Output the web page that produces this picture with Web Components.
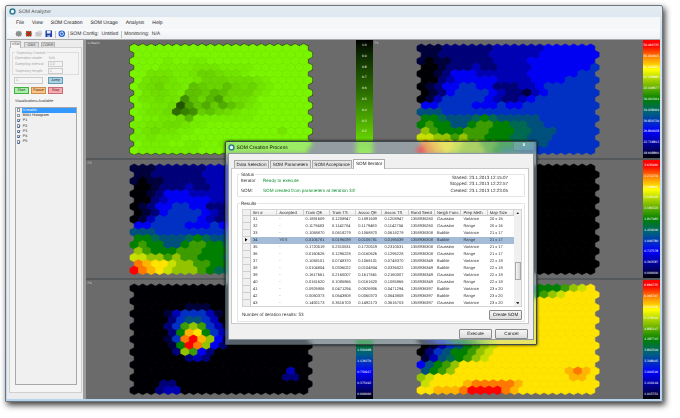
<!DOCTYPE html>
<html>
<head>
<meta charset="utf-8">
<title>SOM Analyzer</title>
<style>
  html, body { margin: 0; padding: 0; background: #fff; width: 680px; height: 418px; overflow: hidden; }
  body { font-family: "Liberation Sans", Arial, sans-serif; text-rendering: geometricPrecision; }
</style>
</head>
<body>
<som-window></som-window>
<script>
(function () {
  const FONT = '"Liberation Sans", Arial, sans-serif';

  /* colours of the map levels, 0 (low) to f (high) */
  const HEAT = ["#000004", "#00003a", "#000078", "#0000b4", "#0000f4", "#0030c4", "#00507e", "#006a50",
    "#008000", "#3c9c00", "#94c400", "#c8e000", "#ffe400", "#ffb400", "#ff7800", "#ff0000"];
  const GREEN = ["#0c2400", "#183c00", "#245400", "#2e6a00", "#388000", "#409000", "#48a000", "#50ac00",
    "#58b800", "#5ec200", "#64cc00", "#6ad400", "#6edc00", "#72e400", "#76ec00", "#7af400"];
  const GRADIENT = "linear-gradient(#f00 0,#f00 5%,#ff8000 14%,#ff0 25%,#84c000 37%,#008000 50%,#006080 62%,#00f 77%,#000070 92%,#000 100%)";

  const blue = [
    "111222222333333444444", "112222223333334444444", "101122222333344444444", "001222322333344444445",
    "001244433333344444455", "002344444333344445555", "012445544222334555555", "012455554322134555555",
    "013555554322345555555", "445555444544555555555", "666555555555555555555", "887666787666665555555",
    "898866899887766555555", "a98889998887766655555", "bbaa9a998887766655555", "edccbaa99887766555555",
    "fedcbaaa9877665555555"
  ];

  const MAPS = {
    umatrix: {
      palette: GREEN, outline: true, rows: [
        "fffffffffffffffffffff", "fffffffffffffffffffff", "ffffeffeeffffffffffff", "fffeeeedddeeeefffffff",
        "ffdddeedbbcddefffffff", "fdccdeedbbbcccdefffff", "fdcbdde9abb9bcbdeffff", "fdccde99a89bbbdefffff",
        "fddcdd59b86bccdffffff", "feddc2697a79bdeffffff", "feddc345a9bcdeeffffff", "feeddc8eeeeeeefffffff",
        "eeddccdeeffffffffffff", "edcddeeffffffffffdfff", "eedeeefffffffffffffff", "feeeffeeffeefffffffff",
        "feeeeeeefffffffffffff"
      ]
    },
    blue: { palette: HEAT, rows: blue },
    spot: {
      palette: HEAT, rows: [
        "000000000000000000000", "000000000000000000000", "000000000000000000000", "000000111000000000000",
        "000013555310000000000", "000025665300000000000", "0000259a9530000000000", "000028dc8531000000000",
        "000015efda41000000000", "000018fea420000000000", "000002a94200000000000", "000000232000000000000",
        "000000000000000000000", "000000000000000000300", "000000000000000000220", "000220000000000000000",
        "000233000000000000000"
      ]
    },
    dark: { palette: ["#000"], rows: Array(17).fill("000000000000000000000") },
    yellow: {
      palette: HEAT, rows: [
        "000112223345668889abc", "000112334566889abcccc", "001123456889abccccccc", "011234568aabccccccccc",
        "1123456689bcccccccccc", "123456889bccccccccccc", "234568aabcccccccccccc", "34568abcccccccccccccc",
        "0256889abcccccccccccc", "0135689abcccccccccccc", "0256889abcccccccccccc", "136789abccccccccccccc",
        "4689acccccccccccccccc", "689acccccccccccccdedc", "abccccccccccccccccddc", "bccccdeeeeedccccccccc",
        "ccdddeffffedccccccccc"
      ]
    }
  };

  class SomHexMap extends HTMLElement {
    connectedCallback() {
      const map = MAPS[this.getAttribute("data")];
      const w = 8.47, rs = 6.38, h = 8.5;
      const width = w * 21.5, height = rs * 16 + h;
      let under = "", over = "";
      map.rows.forEach((row, r) => {
        row.slice(0, 21).split("").forEach((ch, c) => {
          const x = c * w + (r % 2 ? w / 2 : 0), y = r * rs;
          const pts = [[w / 2, 0], [w, h / 4], [w, 3 * h / 4], [w / 2, h], [0, 3 * h / 4], [0, h / 4]]
            .map((p) => (p[0] + x).toFixed(2) + "," + (p[1] + y).toFixed(2)).join(" ");
          const col = map.palette[parseInt(ch, 16)];
          if (map.outline) under += `<polygon points="${pts}" fill="#000" stroke="#000" stroke-width="1.2"/>`;
          over += `<polygon points="${pts}" fill="${col}" stroke="${col}" stroke-width=".7"/>`;
        });
      });
      this.attachShadow({ mode: "open" }).innerHTML = `
        <style>:host{display:block;line-height:0}</style>
        <svg width="${width}" height="${height}" viewBox="0 0 ${width} ${height}" overflow="visible">${under}${over}</svg>`;
    }
  }
  customElements.define("som-hex-map", SomHexMap);

  class SomColorBar extends HTMLElement {
    connectedCallback() {
      const labels = (this.getAttribute("labels") || "").split(" ");
      const green = this.hasAttribute("green");
      this.attachShadow({ mode: "open" }).innerHTML = `
        <style>
          :host{display:flex;flex-direction:column;justify-content:space-between;flex:none;width:17.5px;box-sizing:border-box;
            padding:3px 0 2px;background:${green ? "linear-gradient(#000,#0c2a00 12%,#2c7000 45%,#66d400 85%,#7af400)" : GRADIENT};
            font:3.3px ${FONT};color:#fff;text-align:center;line-height:5px}
          span{display:block;height:5px}
        </style>
        ${labels.map((l) => `<span>${l === "-" ? "" : l}</span>`).join("")}`;
    }
  }
  customElements.define("som-color-bar", SomColorBar);

  class SomMapCell extends HTMLElement {
    connectedCallback() {
      const name = this.getAttribute("name");
      this.attachShadow({ mode: "open" }).innerHTML = `
        <style>
          :host{display:flex;min-width:0;min-height:0}
          .area{position:relative;flex:1;display:flex;align-items:center;justify-content:center;background:#6b6b6b}
          .name{position:absolute;left:1.5px;top:1px;font:3.3px ${FONT};color:#d8d8d8}
        </style>
        <div class="area">
          ${name ? `<span class="name">${name}</span>` : ""}
          <som-hex-map data="${this.getAttribute("data")}"></som-hex-map>
        </div>
        <som-color-bar labels="${this.getAttribute("labels")}" ${this.hasAttribute("green") ? "green" : ""}></som-color-bar>`;
    }
  }
  customElements.define("som-map-cell", SomMapCell);

  class SomMapGrid extends HTMLElement {
    constructor() {
      super();
      this.attachShadow({ mode: "open" }).innerHTML = `
        <style>
          :host{flex:1;display:grid;grid-template-columns:1fr 1fr;grid-template-rows:118px 118px 1fr;row-gap:2px;background:#54585a;min-width:0}
        </style>
        <som-map-cell name="U-Matrix" data="umatrix" green labels="1.0 0.9 0.8 0.7 0.6 0.5 0.4 0.3 0.2 - -"></som-map-cell>
        <som-map-cell name="P1" data="blue" labels="59.460735 55.300015 51.202820 47.238686 43.108677 39.002164 34.938469 30.820739 26.800028 22.718813 18.608860"></som-map-cell>
        <som-map-cell name="P2" data="blue" labels="- - - - - - - - - - -"></som-map-cell>
        <som-map-cell data="dark" labels="3.635966 3.272279 2.908869 2.545100 2.181520 1.817983 1.454046 1.090780 0.727578 0.363587 0.000000"></som-map-cell>
        <som-map-cell name="P4" data="spot" labels="- - - - - - 1.501668 1.126376 0.750917 0.375492 0.000000"></som-map-cell>
        <som-map-cell data="yellow" labels="6.860735 6.365707 5.871558 5.376540 4.882147 4.387743 3.893349 3.398945 2.904546 2.410149 1.915751"></som-map-cell>`;
    }
  }
  customElements.define("som-map-grid", SomMapGrid);

  class SomSidePanel extends HTMLElement {
    constructor() {
      super();
      const items = [["U-matrix", false, true], ["BMU Histogram", false], ["P1", true], ["P2", true], ["P3", true], ["P4", true], ["P5", true]];
      this.attachShadow({ mode: "open" }).innerHTML = `
        <style>
          :host{display:flex;flex-direction:column;flex:none;width:79px;box-sizing:border-box;background:#ececec;border-right:3px solid #9c9c9c;font:3.7px ${FONT};color:#444;padding-top:1px}
          .tabs{display:flex;height:6px;flex:none;align-items:flex-end;padding-left:3px;position:relative;z-index:1}
          .tabs span{width:15px;height:5.5px;background:#dcdcdc;border:1px solid #b4b4b4;border-bottom:0;box-sizing:border-box;line-height:4.5px;text-align:center;margin-right:2px}
          .tabs span:first-child{width:11px;height:7px;margin-right:3px;margin-bottom:-1px;background:#f6f6f6}
          .tabs span:last-child{width:14px}
          .pane{flex:1;background:#f4f4f4;border:1px solid #d0d0d0;margin:0 1px 6px 2px;padding:4px 2px 7px;display:flex;flex-direction:column;min-height:0}
          .group{flex:none;border:1px solid #ddd;padding:1.5px 2px 0;color:#a4a4a4;position:relative;height:23px;box-sizing:border-box;display:grid;grid-template-columns:32.7px 1fr;grid-auto-rows:6.5px;align-items:center}
          .legend{position:absolute;top:-2.5px;left:2px;background:#f4f4f4;padding:0 1px;line-height:4px}
          .spin{width:15.5px;height:6px;border:1px solid #ccc;box-sizing:border-box;padding-left:1px;line-height:4px}
          .rowj{display:flex;gap:5px;margin:2px 0 0 2px;flex:none}
          .rowj .spin{width:29px;height:6.5px;color:#999}
          .btn{height:7px;width:15px;box-sizing:border-box;border:1px solid #777;line-height:5px;text-align:center;color:#333}
          .jump{background:#a8d4e8;border-color:#6a9ab0}
          .btns{display:flex;gap:2px;margin:2.5px 0 0 2px;flex:none}
          .start{background:#a8f0a8;border-color:#40b040}.pause{background:#ffc080;border-color:#c89050}.stop{background:#ffa8b0;border-color:#c07078}
          .title{flex:none;margin:5px 0 3px 3px;color:#333;line-height:5px}
          .list{flex:1;margin:0 2px 0 3px;border:1px solid #a8a8a8;background:#f0f0f0;color:#222;min-height:0}
          .item{display:flex;align-items:center;height:5.3px;line-height:5px}
          .box{width:3.5px;height:3.5px;border:.5px solid #8a9aa8;background:#f4f6f8;margin:0 1.500px 0 .7px;flex:none;box-sizing:border-box;position:relative}
          .box svg{position:absolute;left:-.5px;top:-.5px;width:3.5px;height:3.5px}
          .label{flex:1;padding-left:1px}
          .sel{background:#3399ff;color:#fff}
        </style>
        <div class="tabs"><span>VSM</span><span>OBS</span><span>CORR</span></div>
        <div class="pane">
          <div class="group">
            <span class="legend">Trajectory Control</span>
            <span>Operation mode:</span><span>&nbsp;N/A</span>
            <span>Sampling interval:</span><span class="spin">1.0</span>
            <span>Trajectory length:</span><span class="spin">1</span>
          </div>
          <div class="rowj"><span class="spin">1</span><span class="btn jump">Jump</span></div>
          <div class="btns"><span class="btn start">Start</span><span class="btn pause">Pause</span><span class="btn stop">Stop</span></div>
          <div class="title">Visualizations Available</div>
          <div class="list">
            ${items.map((i) => `<div class="item"><span class="box">${i[1] ? '<svg viewBox="0 0 8 8"><path d="M1.5 4l2 2.5L7 1" fill="none" stroke="#2040a0" stroke-width="1.6"/></svg>' : ""}</span><span class="label ${i[2] ? "sel" : ""}">${i[0]}</span></div>`).join("")}
          </div>
        </div>`;
    }
  }
  customElements.define("som-side-panel", SomSidePanel);

  class SomToolbar extends HTMLElement {
    constructor() {
      super();
      const cog = "M8 1l2 2 3-.5.5 3L15 8l-1.500 2.500-.5 3-3-.5L8 15l-2-2-3 .5-.5-3L1 8l1.500-2.500.5-3 3 .5z";
      this.attachShadow({ mode: "open" }).innerHTML = `
        <style>
          :host{display:flex;align-items:center;flex:none;height:11px;background:linear-gradient(#fafbfc,#eef0f3);font:5px ${FONT};color:#333;padding-left:7.5px;gap:2.5px;border-bottom:1px solid #a6a8aa;box-sizing:border-box}
          svg{width:7.5px;height:7.5px;flex:none}
          .sep{width:1px;height:7px;background:#c0c0c0}
          .txt{margin-left:-1.5px}
        </style>
        <svg viewBox="0 0 16 16"><path d="${cog}" fill="#8e8e8e"/></svg>
        <svg viewBox="0 0 16 16"><path d="${cog}" fill="#2f8f3a"/><path d="M3 3l10 10M13 3L3 13" stroke="#d81818" stroke-width="3.400"/></svg>
        <svg viewBox="0 0 16 16"><path d="M1 4h5l1 2h8l-2 8H1z" fill="#c8c8c8"/><path d="M7 2h6v4H7z" fill="#ececec" stroke="#b4b4b4"/></svg>
        <svg viewBox="0 0 16 16"><path d="M1 1h14v14H1z" fill="#1c3fa8"/><path d="M4 1.500h8v6H4z" fill="#e8eef8"/><path d="M5 11h6v4H5z" fill="#9fb4dc"/></svg>
        <span class="sep"></span>
        <svg viewBox="0 0 16 16"><circle cx="8" cy="8" r="7" fill="#2a62c8"/><circle cx="8" cy="8" r="3.500" fill="none" stroke="#cfe4fa" stroke-width="2"/><path d="M8 2v4l3-2z" fill="#cfe4fa"/></svg>
        <span class="sep"></span>
        <span class="txt">SOM Config:&nbsp; Untitled</span>
        <span class="sep"></span>
        <span>Monitoring:&nbsp; N/A</span>`;
    }
  }
  customElements.define("som-toolbar", SomToolbar);

  class SomMenuBar extends HTMLElement {
    constructor() {
      super();
      this.attachShadow({ mode: "open" }).innerHTML = `
        <style>
          :host{display:flex;align-items:center;flex:none;height:12px;background:#f6f7f9;font:5px ${FONT};color:#222;padding-left:9px;gap:8px}
        </style>
        <span>File</span><span>View</span><span>SOM Creation</span><span>SOM Usage</span><span>Analysis</span><span>Help</span>`;
    }
  }
  customElements.define("som-menu-bar", SomMenuBar);

  class SomAppIcon extends HTMLElement {
    constructor() {
      super();
      this.attachShadow({ mode: "open" }).innerHTML = `
        <style>:host{display:inline-block;width:7px;height:7px;line-height:0;flex:none}svg{width:7px;height:7px}</style>
        <svg viewBox="0 0 16 16"><circle cx="8" cy="8" r="5.500" fill="#f2f8fa" stroke="#2f7f94" stroke-width="3.500"/></svg>`;
    }
  }
  customElements.define("som-app-icon", SomAppIcon);

  class SomGroup extends HTMLElement {
    constructor() {
      super();
      this.attachShadow({ mode: "open" }).innerHTML = `
        <style>
          :host{display:block;position:relative;border:1px solid #e2e4e6;border-radius:1px;box-sizing:border-box;background:#fff;min-height:0}
          .legend{position:absolute;left:2px;top:-3px;background:#fff;padding:0 1px;line-height:5px;color:#333}
        </style>
        <span class="legend">${this.getAttribute("legend")}</span><slot></slot>`;
    }
  }
  customElements.define("som-group", SomGroup);

  class SomResultsTable extends HTMLElement {
    constructor() {
      super();
      const head = ["Iter #", "Accepted", "Train QE", "Train TS", "Assoc QE", "Assoc TS", "Rand Seed", "Neigh Func", "Prep Meth", "Map Size"];
      const rows = [
        ["31", "-", "0.1891609", "0.1208947", "1358936260", "Gaussian", "Variance", "20 x 16"],
        ["32", "-", "0.1179483", "0.1142704", "1358936260", "Gaussian", "Range", "20 x 16"],
        ["33", "-", "0.1068870", "0.0618279", "1358936308", "Bubble", "Variance", "21 x 17"],
        ["34", "YES", "0.0106781", "0.0196039", "1358936308", "Bubble", "Range", "21 x 17"],
        ["35", "-", "0.1720519", "0.2310531", "1358936308", "Gaussian", "Variance", "21 x 17"],
        ["36", "-", "0.0160626", "0.1296228", "1358936308", "Gaussian", "Range", "21 x 17"],
        ["37", "-", "0.1068101", "0.0748370", "1358936349", "Bubble", "Variance", "22 x 18"],
        ["38", "-", "0.0104804", "0.0336022", "1358936349", "Bubble", "Range", "22 x 18"],
        ["39", "-", "0.1617661", "0.2160007", "1358936349", "Gaussian", "Variance", "22 x 18"],
        ["40", "-", "0.0161620", "0.1085866", "1358936349", "Gaussian", "Range", "22 x 18"],
        ["41", "-", "0.0926906", "0.0471294", "1358936397", "Bubble", "Variance", "23 x 20"],
        ["42", "-", "0.0060373", "0.0643808", "1358936397", "Bubble", "Range", "23 x 20"],
        ["43", "-", "0.1492173", "0.3616703", "1358936397", "Gaussian", "Variance", "23 x 20"]
      ];
      let body = "";
      rows.forEach((r, i) => {
        const cells = [r[0], r[1], r[2], r[3], r[2], r[3], r[4], r[5], r[6], r[7]];
        body += `<div class="row ${i === 3 ? "sel" : ""}"><div class="rh">${i === 3 ? '<svg width="2.500" height="3.500" viewBox="0 0 3 4"><path d="M0 0l3 2-3 2z"/></svg>' : ""}</div>${cells.map((c) => `<div class="td">${c}</div>`).join("")}</div>`;
      });
      this.attachShadow({ mode: "open" }).innerHTML = `
        <style>
          :host{display:flex;flex:none;height:98px;background:#fff;border:1px solid #d4d4d4;box-sizing:border-box;font:4px ${FONT};color:#333;overflow:hidden}
          .t{flex:1;min-width:0;overflow:hidden}
          .row{display:grid;grid-template-columns:8px repeat(10,26.3px);height:7px;line-height:6.5px}
          .head{height:6px;line-height:5.5px;font-size:4.2px;background:linear-gradient(#fbfbfb,#e8e8e8);box-sizing:border-box}
          .head .td{border-right:1px solid #cfcfcf;border-bottom:1px solid #c8c8c8}
          .td{padding-left:2px;white-space:nowrap;overflow:hidden;box-sizing:border-box}
          .rh{background:#f0f0f0;border-right:1px solid #c8c8c8;border-bottom:1px solid #cfcfcf;box-sizing:border-box;display:flex;align-items:center;justify-content:center}
          .sel{background:#a4bcd8}
          .sel .rh{background:#f0f0f0}
          .bar{flex:none;width:7px;background:#f0f0f0;display:flex;flex-direction:column;box-sizing:border-box}
          .arrow{height:6px;flex:none;display:flex;align-items:center;justify-content:center}
          .track{flex:1;position:relative}
          .thumb{position:absolute;left:.5px;right:.5px;top:46px;height:18px;background:linear-gradient(90deg,#f6f6f6,#d4d4d4);border:.5px solid #a8a8a8;box-sizing:border-box}
        </style>
        <div class="t">
          <div class="row head"><div class="rh"></div>${head.map((h) => `<div class="td">${h}</div>`).join("")}</div>
          ${body}
        </div>
        <div class="bar">
          <div class="arrow"><svg width="3.500" height="2.500" viewBox="0 0 4 3"><path d="M0 3l2-3 2 3z" fill="#333"/></svg></div>
          <div class="track"><div class="thumb"></div></div>
          <div class="arrow"><svg width="3.500" height="2.500" viewBox="0 0 4 3"><path d="M0 0l2 3 2-3z" fill="#333"/></svg></div>
        </div>`;
    }
  }
  customElements.define("som-results-table", SomResultsTable);

  class SomDialog extends HTMLElement {
    constructor() {
      super();
      this.attachShadow({ mode: "open" }).innerHTML = `
        <style>
          :host{position:absolute;left:225px;top:141px;width:312px;height:204px;box-sizing:border-box;display:flex;flex-direction:column;
            background:rgba(205,228,238,.42);backdrop-filter:blur(2px);border:1px solid #3c4a50;border-radius:2px 2px 0 0;box-shadow:0 0 3px #000;padding:0 2px 4px;font:4.6px ${FONT};color:#333}
          .cap{height:11px;flex:none;display:flex;align-items:center;gap:1.5px;font-size:5px;color:#111}
          .close{margin:-3px -1px 0 auto;width:20px;height:8px;border:1px solid #6d8a96;border-top:0;border-radius:0 0 2px 2px;color:#fff;font-weight:bold;text-align:center;line-height:7px;font-size:5px;background:rgba(255,255,255,.12)}
          .client{flex:1;background:#f0f0f0;display:flex;flex-direction:column;padding:5px 4px 0 2px;border:1px solid #8b989e;box-sizing:border-box;min-height:0}
          .tabs{display:flex;height:9px;flex:none;align-items:flex-end;padding-left:3px;position:relative;z-index:1}
          .tabs span{height:8px;line-height:7.5px;background:#e6e6e6;border:1px solid #aaa;border-bottom:0;box-sizing:border-box;padding:0 1.6px;margin-right:1px;color:#222;white-space:nowrap}
          .tabs span.on{height:10px;margin-bottom:-1px;background:#fff;line-height:8.5px}
          .pane{flex:none;height:156px;background:#fff;border:1px solid #c8c8c8;box-sizing:border-box;padding:5px 3px 1px 5px;display:flex;flex-direction:column;gap:6px}
          .status-group{flex:none;height:23px}
          .status{display:flex;justify-content:space-between;padding:0 16px 0 3px;line-height:6.4px}
          .kv{display:grid;grid-template-columns:22px auto;grid-auto-rows:6px;row-gap:4px;line-height:6px;padding-top:3px}
          .ok{color:#109030;white-space:nowrap}
          .times{display:grid;grid-template-columns:21px auto;font-size:4.5px}
          .times span:nth-child(odd){text-align:right;padding-right:1.5px}
          .results-group{flex:1}
          .results{padding:5px 2px 0 4px;display:flex;flex-direction:column}
          .foot{display:flex;align-items:center;justify-content:space-between;margin-top:3px}
          .btn{height:9.5px;width:33px;box-sizing:border-box;border:1px solid #8a8a8a;border-radius:1px;background:linear-gradient(#f6f6f6,#dcdcdc);text-align:center;line-height:7.5px;color:#222}
          .actions{display:flex;justify-content:flex-end;gap:3px;margin-top:5px;padding-right:1px}
        </style>
        <div class="cap"><som-app-icon></som-app-icon><span>SOM Creation Process</span><span class="close">x</span></div>
        <div class="client">
          <div class="tabs"><span>Data Selection</span><span>SOM Parameters</span><span>SOM Acceptance</span><span class="on">SOM Iterator</span></div>
          <div class="pane">
            <som-group class="status-group" legend="Status">
              <div class="status">
                <div class="kv"><span>Iterator</span><span class="ok">Ready to execute</span><span>SOM:</span><span class="ok">SOM created from parameters at iteration 34!</span></div>
                <div class="times"><span>Started:</span><span>23.1.2013 12:15:07</span><span>Stopped:</span><span>23.1.2013 12:22:57</span><span>Created:</span><span>23.1.2013 12:23:05</span></div>
              </div>
            </som-group>
            <som-group class="results-group" legend="Results">
              <div class="results">
                <som-results-table></som-results-table>
                <div class="foot"><span>Number of iteration results: 53</span><span class="btn">Create SOM</span></div>
              </div>
            </som-group>
          </div>
          <div class="actions"><span class="btn">Execute</span><span class="btn">Cancel</span></div>
        </div>`;
    }
  }
  customElements.define("som-dialog", SomDialog);

  class SomWindow extends HTMLElement {
    constructor() {
      super();
      this.attachShadow({ mode: "open" }).innerHTML = `
        <style>
          :host{position:absolute;left:5px;top:5px;width:658px;height:397px;box-sizing:border-box;display:flex;flex-direction:column;
            background:linear-gradient(#e4ebf1,#cfe0ee 8%,#b4d4f0);border:1px solid #70777c;border-radius:2px 2px 0 0;box-shadow:2px 3px 6px rgba(0,0,0,.8);padding:0 2px 2px 1px;font-family:${FONT}}
          .cap{height:11px;flex:none;display:flex;align-items:center;gap:2.5px;padding-left:2px;font-size:5.1px;color:#555}
          .body{flex:1;display:flex;min-height:0;background:#666}
        </style>
        <div class="cap"><som-app-icon></som-app-icon><span>SOM Analyzer</span></div>
        <som-menu-bar></som-menu-bar>
        <som-toolbar></som-toolbar>
        <div class="body"><som-side-panel></som-side-panel><som-map-grid></som-map-grid></div>`;
    }
  }
  customElements.define("som-window", SomWindow);

  document.body.appendChild(document.createElement("som-dialog"));
})();
</script>
</body>
</html>
